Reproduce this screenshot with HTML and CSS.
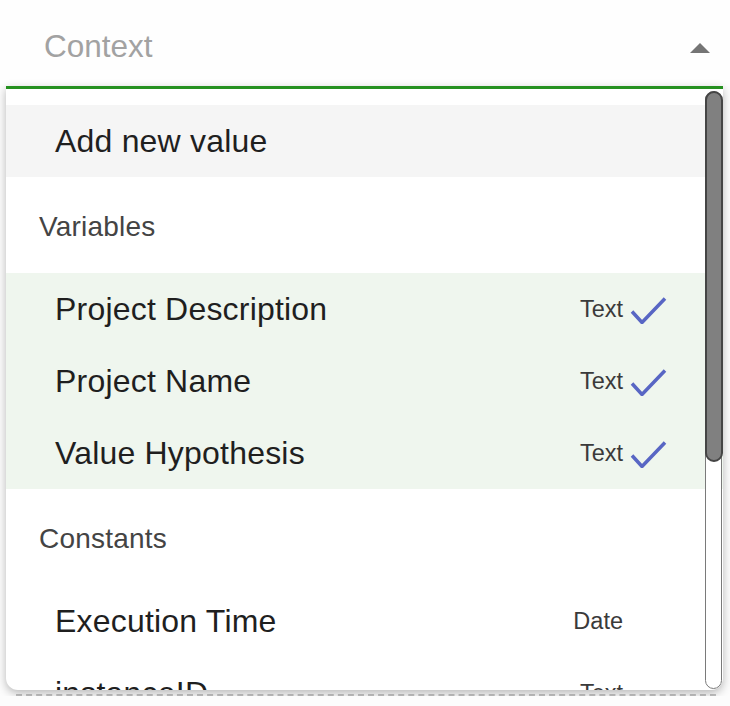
FILE: index.html
```html
<!DOCTYPE html>
<html>
<head>
<meta charset="utf-8">
<title>Context picker</title>
<link rel="stylesheet" href="styles.css">
</head>
<body>
<div class="field">
    <span class="placeholder">Context</span>
    <span class="caret"></span>
</div>
<div class="menu">
    <ul class="options">
        <li class="option add">Add new value</li>
        <li class="subheader">Variables</li>
        <li class="option selected">
            <span class="name">Project Description</span>
            <span class="type">Text</span>
            <span class="tick"><svg width="44" height="30" viewBox="0 0 44 30"><path d="M9 17.5 L19 28.5 L42 4.5" /></svg></span>
        </li>
        <li class="option selected">
            <span class="name">Project Name</span>
            <span class="type">Text</span>
            <span class="tick"><svg width="44" height="30" viewBox="0 0 44 30"><path d="M9 17.5 L19 28.5 L42 4.5" /></svg></span>
        </li>
        <li class="option selected">
            <span class="name">Value Hypothesis</span>
            <span class="type">Text</span>
            <span class="tick"><svg width="44" height="30" viewBox="0 0 44 30"><path d="M9 17.5 L19 28.5 L42 4.5" /></svg></span>
        </li>
        <li class="subheader">Constants</li>
        <li class="option">
            <span class="name">Execution Time</span>
            <span class="type">Date</span>
            <span class="tick"></span>
        </li>
        <li class="option">
            <span class="name">instanceID</span>
            <span class="type">Text</span>
            <span class="tick"></span>
        </li>
    </ul>
    <div class="scrollbar">
        <div class="thumb"></div>
    </div>
</div>
<div class="below"></div>
</body>
</html>
```

FILE: styles.css
```css
body {
    margin: 0;
    background: #fcfcfc;
    font-family: "Liberation Sans", Arial, sans-serif;
    color: #212121;
}

.field {
    display: flex;
    align-items: center;
    justify-content: space-between;
    box-sizing: border-box;
    height: 86px;
    padding: 7px 20px 0 44px;
    background: #fefefe;
}

.placeholder {
    font-size: 31.5px;
    color: #a2a2a2;
}

.caret {
    width: 0;
    height: 0;
    margin-top: 2px;
    border-left: 10px solid transparent;
    border-right: 10px solid transparent;
    border-bottom: 10px solid #757575;
}

.menu {
    position: relative;
    margin: 0 7px 0 6px;
    height: 601px;
    background: #fff;
    border-top: 3px solid #25901f;
    border-radius: 0 0 12px 12px;
    box-shadow: 0 3px 10px rgba(0, 0, 0, 0.28);
    overflow: hidden;
}

.options {
    list-style: none;
    margin: 0;
    padding: 16px 0 0;
}

.option {
    display: flex;
    align-items: center;
    height: 72px;
    padding: 0 56px 0 49px;
    font-size: 32px;
    letter-spacing: 0.2px;
    color: #1f1f1f;
}

.add {
    background: #f5f5f5;
}

.selected {
    background: #eff6ee;
}

.name {
    flex: 1;
}

.type {
    font-size: 23.5px;
    letter-spacing: 0;
    color: #3a3a3a;
}

.tick {
    width: 44px;
    height: 30px;
}

.tick path {
    fill: none;
    stroke: #5866c4;
    stroke-width: 3.5;
}

.subheader {
    height: 96px;
    line-height: 100px;
    padding-left: 33px;
    font-size: 28px;
    letter-spacing: 0.2px;
    color: #444;
}

.scrollbar {
    position: absolute;
    top: 2px;
    right: 1px;
    bottom: 1px;
    width: 17px;
    box-sizing: border-box;
    border: 1.5px solid #7a7a7a;
    border-radius: 9px;
    background: #fff;
}

.thumb {
    height: 371px;
    margin: -1.5px;
    box-sizing: border-box;
    background: #808080;
    border: 2px solid #454545;
    border-radius: 9px;
}

.below {
    margin: 4px 14px 0 16px;
    border-top: 2px dashed #c4c4c4;
}
```
